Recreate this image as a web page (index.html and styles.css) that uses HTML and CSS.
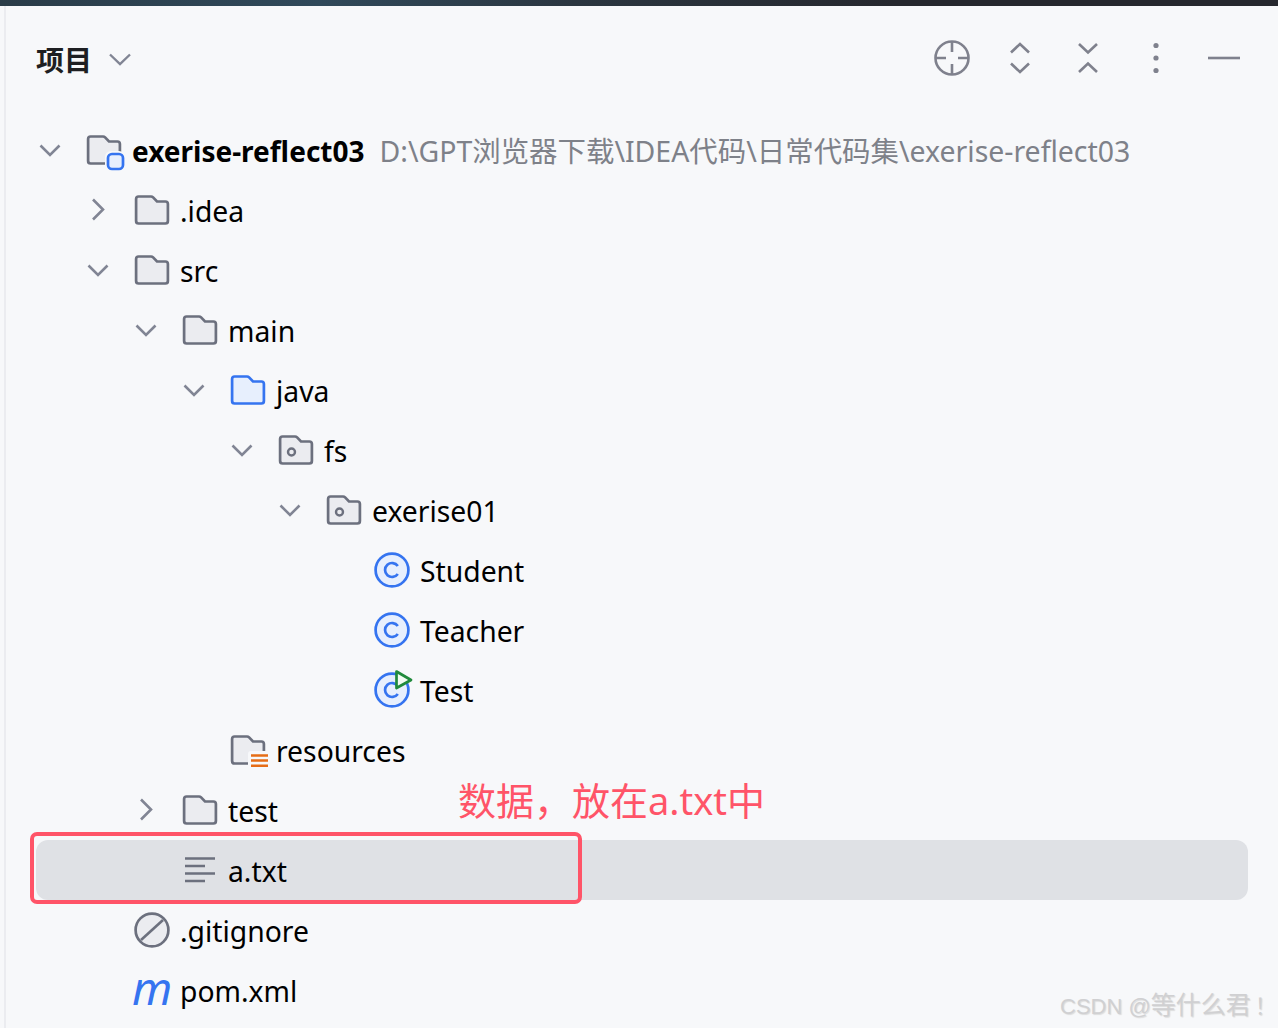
FILE: index.html
```html
<!DOCTYPE html>
<html lang="zh">
<head>
<meta charset="utf-8">
<title>项目</title>
<link rel="stylesheet" href="styles.css">
</head>
<body>
<svg class="defs" width="0" height="0" aria-hidden="true">
  <symbol id="chev-down" viewBox="0 0 28 28"><path d="M4.5 9.5 14 19 23.500 9.500"/></symbol>
  <symbol id="chev-right" viewBox="0 0 28 28"><path d="M9 3.500 19 13.500 9 23.500"/></symbol>
  <symbol id="folder" viewBox="0 0 36 36"><path d="M2.100 7A2.500 2.500 0 0 1 4.600 4.500H17a3 3 0 0 1 2.100.9L23 9.500h8.400a2.500 2.500 0 0 1 2.500 2.500V29a2.500 2.500 0 0 1-2.500 2.500H4.600A2.500 2.500 0 0 1 2.100 29Z"/></symbol>
  <symbol id="cls" viewBox="0 0 36 36"><circle cx="18" cy="18" r="16.400"/><path class="c-mark" d="M23.800 14A7 7 0 1 0 23.800 22"/></symbol>
</svg>

<main class="panel">
  <header class="head">
    <div class="title-wrap">
      <h1 class="title">项目</h1>
      <svg class="ico-title" viewBox="0 0 28 28"><path d="M4 8.500 14 18 24 8.500"/></svg>
    </div>
    <div class="actions">
      <svg class="act" viewBox="0 0 36 36"><circle cx="18" cy="18" r="16.500"/><path d="M18 1.500v10.500M18 24v10.500M1.500 18H12M24 18h10.500"/></svg>
      <svg class="act" viewBox="0 0 36 36"><path d="M9 12.500 18 4l9 8.500M9 23.500 18 32l9-8.500"/></svg>
      <svg class="act" viewBox="0 0 36 36"><path d="M9 4l9 8.500L27 4M9 32l9-8.500L27 32"/></svg>
      <svg class="act act-fill" viewBox="0 0 36 36"><circle cx="18" cy="5.500" r="2.600"/><circle cx="18" cy="18" r="2.600"/><circle cx="18" cy="30.500" r="2.600"/></svg>
      <svg class="act" viewBox="0 0 36 36"><path d="M2 18h32"/></svg>
    </div>
  </header>

  <ul class="tree">
    <li class="row d0">
      <svg class="chev"><use href="#chev-down"/></svg>
      <svg class="ico"><use class="fold" href="#folder"/><rect class="halo" x="19" y="19" width="20" height="20" rx="6"/><rect class="badge" x="22" y="22" width="15" height="15" rx="4"/></svg>
      <span class="name strong">exerise-reflect03</span><span class="name path">D:\GPT浏览器下载\IDEA代码\日常代码集\exerise-reflect03</span>
    </li>
    <li class="row d1">
      <svg class="chev"><use href="#chev-right"/></svg>
      <svg class="ico"><use class="fold" href="#folder"/></svg>
      <span class="name">.idea</span>
    </li>
    <li class="row d1">
      <svg class="chev"><use href="#chev-down"/></svg>
      <svg class="ico"><use class="fold" href="#folder"/></svg>
      <span class="name">src</span>
    </li>
    <li class="row d2">
      <svg class="chev"><use href="#chev-down"/></svg>
      <svg class="ico"><use class="fold" href="#folder"/></svg>
      <span class="name">main</span>
    </li>
    <li class="row d3">
      <svg class="chev"><use href="#chev-down"/></svg>
      <svg class="ico"><use class="fold blue" href="#folder"/></svg>
      <span class="name">java</span>
    </li>
    <li class="row d4">
      <svg class="chev"><use href="#chev-down"/></svg>
      <svg class="ico"><use class="fold" href="#folder"/><circle class="pkg" cx="13.500" cy="20" r="3.500"/></svg>
      <span class="name">fs</span>
    </li>
    <li class="row d5">
      <svg class="chev"><use href="#chev-down"/></svg>
      <svg class="ico"><use class="fold" href="#folder"/><circle class="pkg" cx="13.500" cy="20" r="3.500"/></svg>
      <span class="name">exerise01</span>
    </li>
    <li class="row d6">
      <span class="chev"></span>
      <svg class="ico"><use class="cls" href="#cls"/></svg>
      <span class="name">Student</span>
    </li>
    <li class="row d6">
      <span class="chev"></span>
      <svg class="ico"><use class="cls" href="#cls"/></svg>
      <span class="name">Teacher</span>
    </li>
    <li class="row d6">
      <span class="chev"></span>
      <svg class="ico"><use class="cls" href="#cls"/><path class="play" d="M22.500 -0.500 37 8 22.500 16Z"/></svg>
      <span class="name">Test</span>
    </li>
    <li class="row d3">
      <span class="chev"></span>
      <svg class="ico"><use class="fold" href="#folder"/><rect class="halo" x="18" y="19" width="21" height="19" rx="3"/><path class="res" d="M21 23.500h17M21 28.500h17M21 33.800h17"/></svg>
      <span class="name">resources</span>
    </li>
    <li class="row d2">
      <svg class="chev"><use href="#chev-right"/></svg>
      <svg class="ico"><use class="fold" href="#folder"/></svg>
      <span class="name">test</span>
    </li>
    <li class="row d2 selected">
      <span class="chev"></span>
      <svg class="ico"><path class="lines" d="M3 6.500h30M3 14h20M3 21.500h30M3 29h20"/></svg>
      <span class="name">a.txt</span>
    </li>
    <li class="row d1">
      <span class="chev"></span>
      <svg class="ico"><circle class="ignore" cx="18" cy="18" r="16.400"/><path class="lines" d="M7 28 29 8"/></svg>
      <span class="name">.gitignore</span>
    </li>
    <li class="row d1">
      <span class="chev"></span>
      <span class="ico maven">m</span>
      <span class="name">pom.xml</span>
    </li>
  </ul>

  <div class="mark-box"></div>
  <p class="note">数据，放在a.txt中</p>
  <p class="watermark">CSDN @<span class="wm-cjk">等什么君<span class="wm-bang">！</span></span></p>
</main>
</body>
</html>
```

FILE: styles.css
```css
* { box-sizing: border-box; }
html, body { margin: 0; padding: 0; }
body {
  width: 1278px;
  height: 1028px;
  overflow: hidden;
  background: #f7f8fa;
  font-family: "Noto Sans", "Noto Sans CJK SC", sans-serif;
  color: #000;
}
.defs { position: absolute; }
.panel {
  position: relative;
  height: 1028px;
  border-top: 6px solid #26282e;
  border-image: linear-gradient(90deg, #2a3c48 0%, #30495a 25%, #2b3640 45%, #26282e 70%) 1;
  border-left: 0;
}
.panel::before {
  content: "";
  position: absolute;
  left: 4px;
  top: 0;
  bottom: 0;
  width: 2px;
  background: #ebecf0;
}
.head {
  height: 114px;
  padding: 0 36px 8px 36px;
  display: flex;
  align-items: center;
  justify-content: space-between;
}
.title-wrap { display: flex; align-items: center; gap: 14px; }
.title {
  margin: 0;
  font: 700 28px/40px "Noto Sans CJK SC", sans-serif;
  color: #1e1f22;
}
.ico-title { width: 28px; height: 28px; margin-top: 2px; }
.ico-title path { fill: none; stroke: #818594; stroke-width: 2.4; }
.actions { display: flex; gap: 32px; margin-top: -2px; }
.act { width: 36px; height: 36px; overflow: visible; }
.act circle, .act path { fill: none; stroke: #7f818d; stroke-width: 2.6; }
.act-fill circle { fill: #7f818d; stroke: none; }

.tree { list-style: none; margin: 0 30px 0 36px; padding: 0; }
.row {
  height: 60px;
  display: flex;
  align-items: center;
  border-radius: 12px;
  font-size: 28.3px;
  white-space: nowrap;
}
.row.selected { background: #dfe1e5; }
.d0 { padding-left: 0; }
.d1 { padding-left: 48px; }
.d2 { padding-left: 96px; }
.d3 { padding-left: 144px; }
.d4 { padding-left: 192px; }
.d5 { padding-left: 240px; }
.d6 { padding-left: 288px; }

.chev { width: 28px; height: 28px; flex: none; fill: none; stroke: #818594; stroke-width: 2.6; }
.ico { width: 36px; height: 36px; flex: none; margin: 0 10px 0 22px; overflow: visible; }
.fold { fill: #ebecf0; stroke: #6c707e; stroke-width: 2.7; }
.fold.blue { fill: #e7effd; stroke: #3574f0; }
.halo { fill: #f7f8fa; }
.badge { fill: #e7effd; stroke: #3574f0; stroke-width: 2.7; }
.pkg { fill: none; stroke: #6c707e; stroke-width: 2.4; }
.cls { fill: #e7effd; stroke: #3574f0; stroke-width: 2.7; }
.c-mark { fill: none; }
.play { fill: #f2fcf3; stroke: #208a3c; stroke-width: 2.7; stroke-linejoin: round; }
.res { fill: none; stroke: #e66d17; stroke-width: 2.6; }
.lines { fill: none; stroke: #6c707e; stroke-width: 2.6; }
.ignore { fill: #ebecf0; stroke: #6c707e; stroke-width: 2.7; }
.maven {
  display: block;
  margin-left: 20px;
  margin-right: 8px;
  width: 40px;
  font: italic 400 46px/30px "Noto Sans", sans-serif;
  color: #3574f0;
  text-align: center;
}
.name { line-height: 40px; padding-top: 2px; }
.strong { font-weight: 700; font-size: 28px; }
.path { margin-left: 15px; color: #7e8189; font-size: 28.45px; }

.mark-box {
  position: absolute;
  left: 30px;
  top: 826px;
  width: 552px;
  height: 72px;
  border: 4px solid #ff5468;
  border-radius: 7px;
}
.note {
  position: absolute;
  left: 458px;
  top: 767px;
  margin: 0;
  font-size: 38px;
  line-height: 54px;
  color: #ff5468;
  white-space: nowrap;
}
.watermark {
  position: absolute;
  left: 1060px;
  top: 981px;
  margin: 0;
  font: 22px/32px "Liberation Sans", "Noto Sans CJK TC", sans-serif;
  color: #d0d0d2;
  text-shadow: 1px 1px 1px #dcdcdc;
  white-space: nowrap;
}
.wm-cjk { font: 25px/32px "Noto Sans CJK TC", sans-serif; }
.wm-bang { padding-left: 4px; font-size: 22px; }
```
